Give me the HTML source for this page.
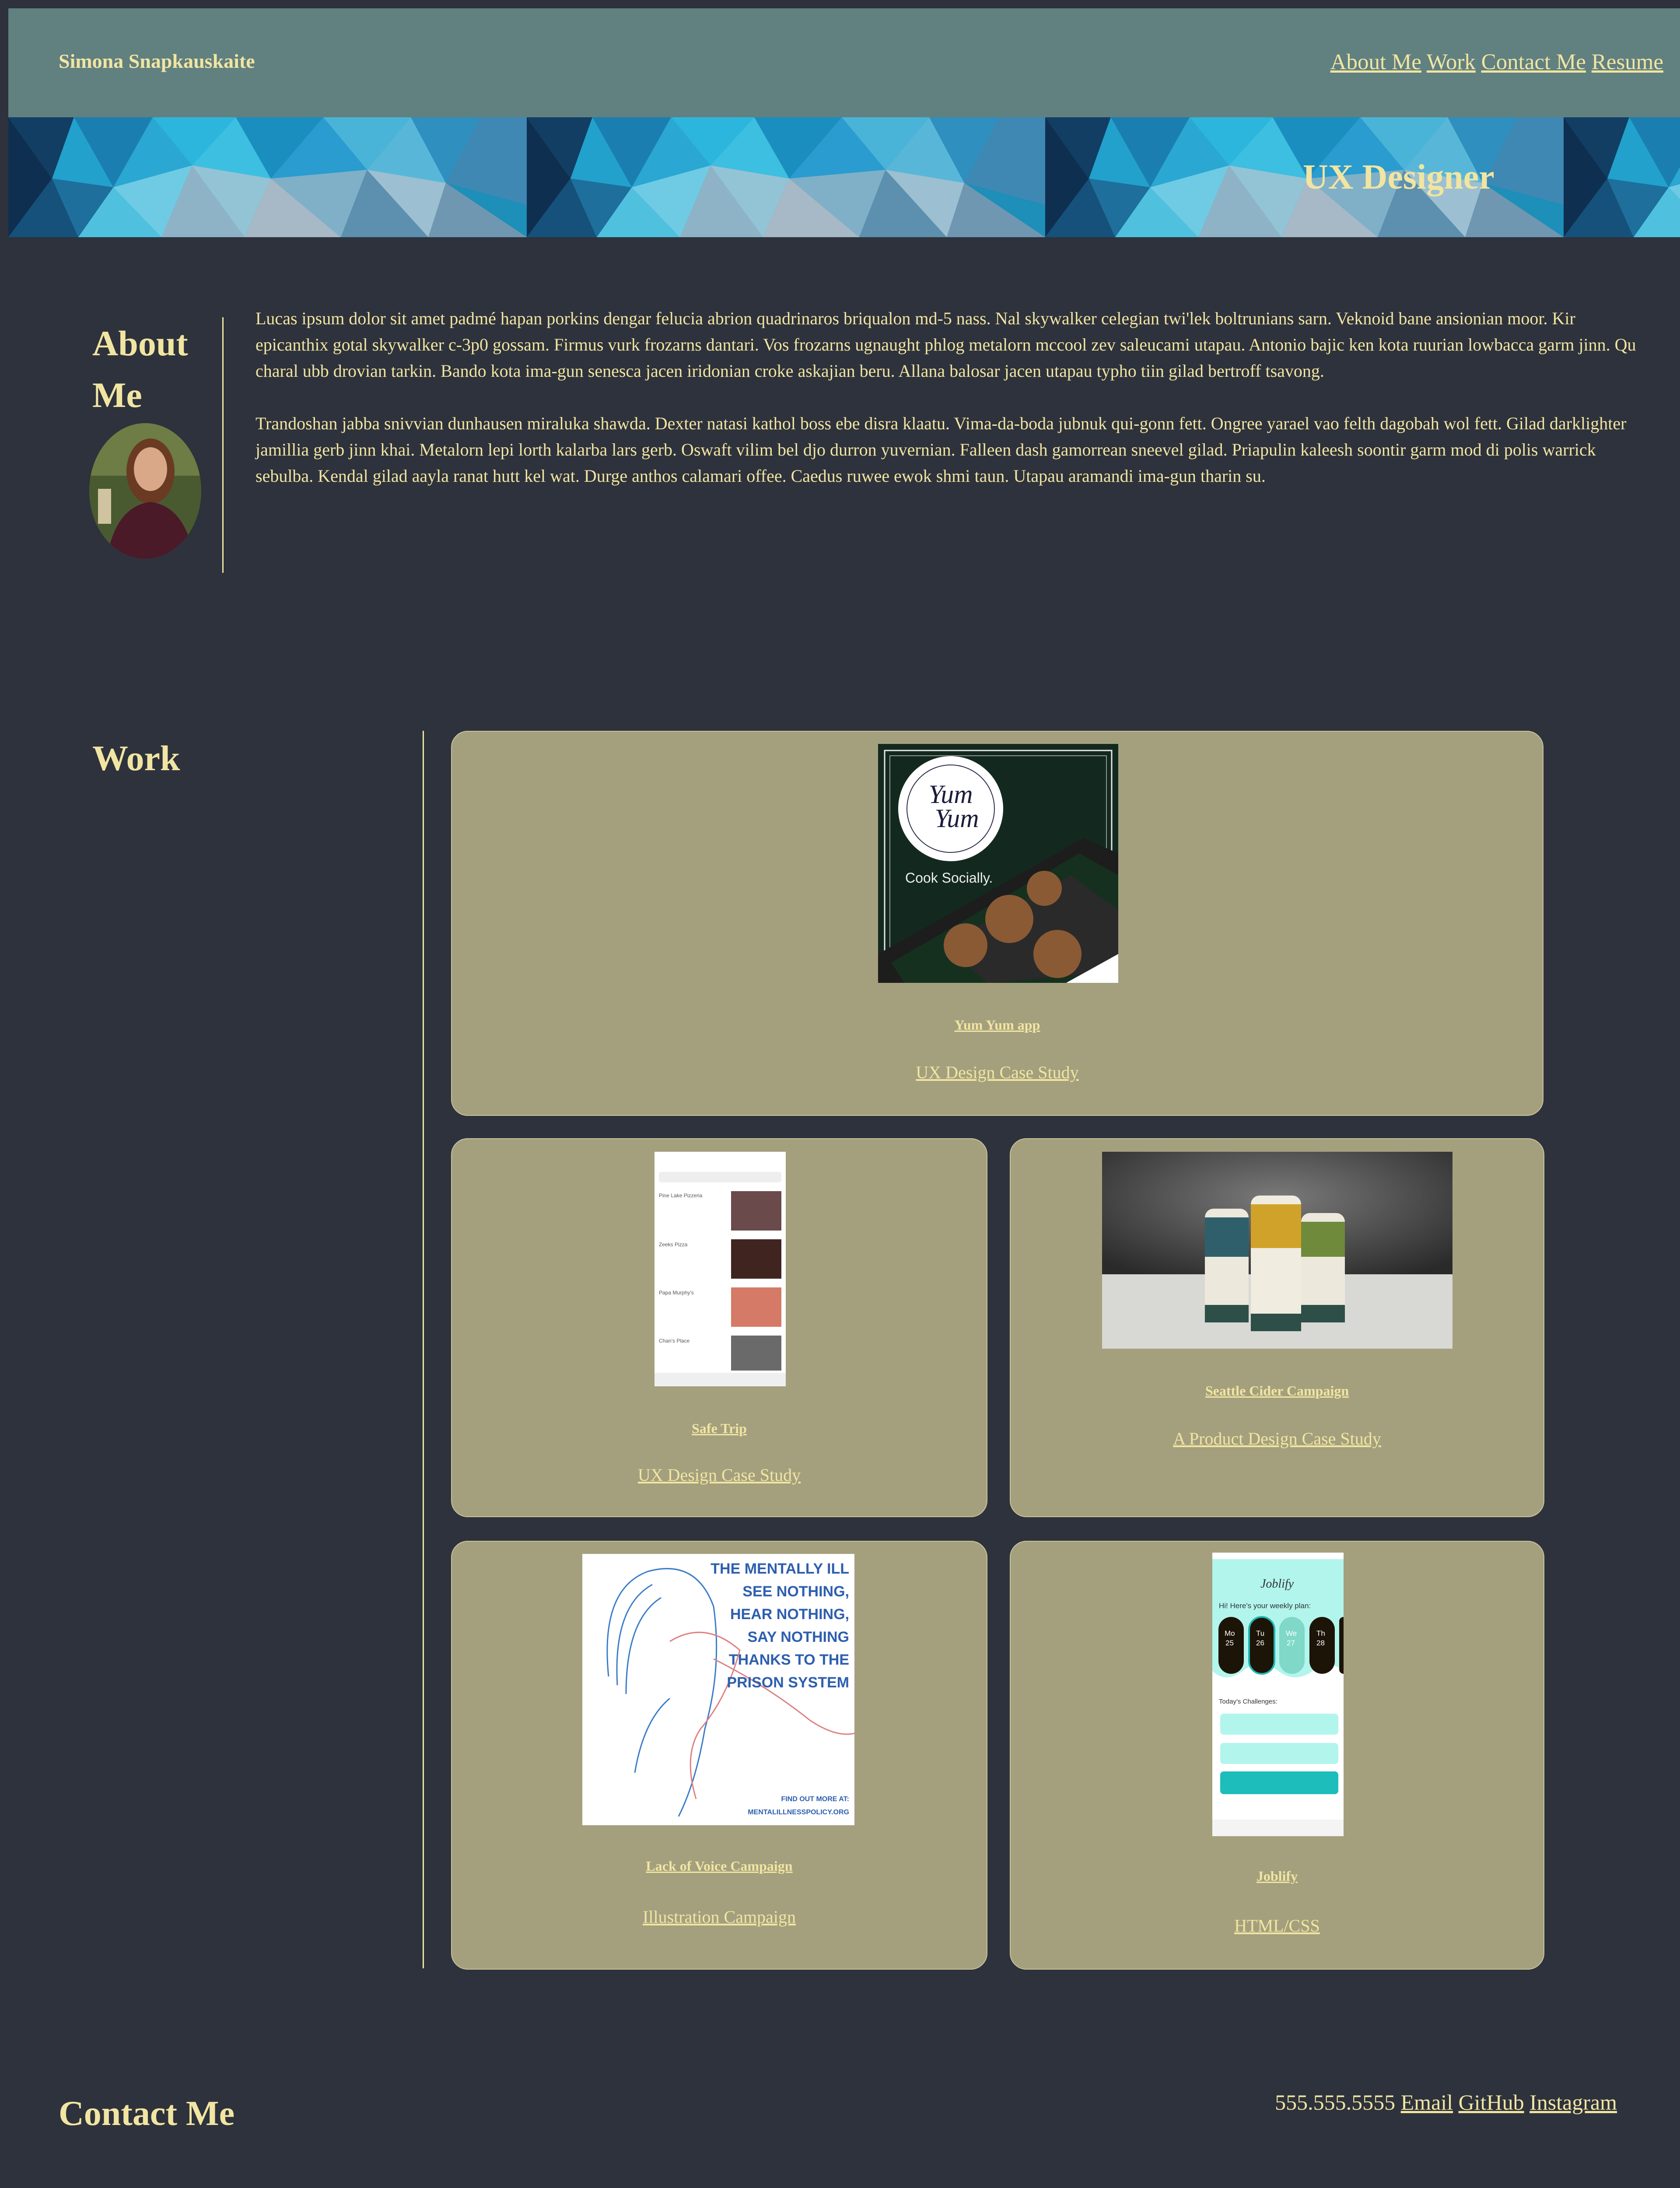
<!DOCTYPE html>
<html><head><meta charset="utf-8">
<style>
*{margin:0;padding:0;box-sizing:border-box}
html,body{width:3840px;height:5005px;background:#2e323c;overflow:hidden}
body{position:relative;font-family:"Liberation Serif",serif;color:#f1e5a2}
a{color:#f1e5a2;text-decoration:underline}
.abs{position:absolute}
.card{position:absolute;background:#a4a07e;border:2px solid #c9c39a;border-radius:38px;overflow:hidden}
.card .t{position:absolute;left:0;right:0;text-align:center;font-weight:bold;font-size:32px}
.card .s{position:absolute;left:0;right:0;text-align:center;font-size:40px}
p{font-size:40px;line-height:60px}
</style></head><body>
<div class="abs" style="left:19px;top:19px;width:3821px;height:249px;background:#618080"></div>
<div class="abs" style="left:134px;top:112px;font-size:46px;font-weight:bold;line-height:56px">Simona Snapkauskaite</div>
<div class="abs" style="right:38px;top:112px;font-size:51px;line-height:60px;white-space:nowrap"><a>About Me</a> <a>Work</a> <a>Contact Me</a> <a>Resume</a></div>
<svg class="abs" style="left:19px;top:268px" width="3821" height="274">
<defs><pattern id="p" width="1185" height="274" patternUnits="userSpaceOnUse">
<rect width="1185" height="274" fill="#1d8fb8"/>
<polygon points="0,0 150,0 100,140" fill="#123e63"/>
<polygon points="0,0 100,140 0,274" fill="#0f2f50"/>
<polygon points="0,274 100,140 160,274" fill="#15517a"/>
<polygon points="150,0 330,0 240,160" fill="#1a7fb0"/>
<polygon points="100,140 150,0 240,160" fill="#22a1cc"/>
<polygon points="100,140 240,160 160,274" fill="#1e6f9c"/>
<polygon points="160,274 240,160 350,274" fill="#4fc1df"/>
<polygon points="330,0 520,0 420,110" fill="#2cb6dd"/>
<polygon points="240,160 330,0 420,110" fill="#2aa7d2"/>
<polygon points="240,160 420,110 350,274" fill="#6fcbe4"/>
<polygon points="350,274 420,110 540,274" fill="#8fb3c6"/>
<polygon points="520,0 720,0 600,140" fill="#1b8ec0"/>
<polygon points="420,110 520,0 600,140" fill="#3cbfe0"/>
<polygon points="420,110 600,140 540,274" fill="#93c4d6"/>
<polygon points="540,274 600,140 760,274" fill="#a7b9c6"/>
<polygon points="720,0 920,0 820,120" fill="#4ab4d8"/>
<polygon points="600,140 720,0 820,120" fill="#2a9ccf"/>
<polygon points="600,140 820,120 760,274" fill="#7fb0c8"/>
<polygon points="760,274 820,120 960,274" fill="#5d8fae"/>
<polygon points="920,0 1080,0 1000,150" fill="#2f8fbf"/>
<polygon points="820,120 920,0 1000,150" fill="#58b7d8"/>
<polygon points="820,120 1000,150 960,274" fill="#9cc0d1"/>
<polygon points="960,274 1000,150 1185,274" fill="#6f97b1"/>
<polygon points="1080,0 1185,0 1185,200 1000,150" fill="#3e88b3"/>
</pattern></defs>
<rect width="3821" height="274" fill="url(#p)"/>
</svg>
<div class="abs" style="left:2978px;top:360px;font-size:80px;font-weight:bold;line-height:90px">UX Designer</div>
<div class="abs" style="left:211px;top:726px;font-size:82px;font-weight:bold;line-height:118px">About<br>Me</div>
<svg class="abs" style="left:204px;top:967px" width="256" height="310">
<defs><clipPath id="c"><ellipse cx="128" cy="155" rx="128" ry="155"/></clipPath></defs>
<g clip-path="url(#c)"><rect width="256" height="310" fill="#4a5a30"/>
<rect y="0" width="256" height="120" fill="#6d7d45"/>
<ellipse cx="140" cy="110" rx="55" ry="75" fill="#6b3a22"/>
<ellipse cx="140" cy="105" rx="38" ry="50" fill="#d9a889"/>
<path d="M40 310 Q60 190 140 180 Q220 190 240 310Z" fill="#4a1a28"/>
<rect x="20" y="150" width="30" height="80" fill="#cfc3a0"/></g>
</svg>
<div class="abs" style="left:508px;top:725px;width:3px;height:584px;background:#f1e5a2"></div>
<div class="abs" style="left:584px;top:698px;width:3190px">
<p>Lucas ipsum dolor sit amet padmé hapan porkins dengar felucia abrion quadrinaros briqualon md-5 nass. Nal skywalker celegian twi'lek boltrunians sarn. Veknoid bane ansionian moor. Kir epicanthix gotal skywalker c-3p0 gossam. Firmus vurk frozarns dantari. Vos frozarns ugnaught phlog metalorn mccool zev saleucami utapau. Antonio bajic ken kota ruurian lowbacca garm jinn. Qu charal ubb drovian tarkin. Bando kota ima-gun senesca jacen iridonian croke askajian beru. Allana balosar jacen utapau typho tiin gilad bertroff tsavong.</p>
<p style="margin-top:60px">Trandoshan jabba snivvian dunhausen miraluka shawda. Dexter natasi kathol boss ebe disra klaatu. Vima-da-boda jubnuk qui-gonn fett. Ongree yarael vao felth dagobah wol fett. Gilad darklighter jamillia gerb jinn khai. Metalorn lepi lorth kalarba lars gerb. Oswaft vilim bel djo durron yuvernian. Falleen dash gamorrean sneevel gilad. Priapulin kaleesh soontir garm mod di polis warrick sebulba. Kendal gilad aayla ranat hutt kel wat. Durge anthos calamari offee. Caedus ruwee ewok shmi taun. Utapau aramandi ima-gun tharin su.</p>
</div>
<div class="abs" style="left:211px;top:1683px;font-size:82px;font-weight:bold;line-height:100px">Work</div>
<div class="abs" style="left:966px;top:1670px;width:3px;height:2828px;background:#f1e5a2"></div>

<div class="card" style="left:1031px;top:1670px;width:2497px;height:880px">
<svg class="abs" style="left:974px;top:28px" width="549" height="546">
<rect width="549" height="546" fill="#13291f"/>
<rect x="15" y="15" width="519" height="520" fill="none" stroke="#e8e8e8" stroke-width="3"/>
<rect x="27" y="27" width="495" height="500" fill="none" stroke="#bbb" stroke-width="1.5"/>
<circle cx="166" cy="148" r="120" fill="#fff"/>
<circle cx="166" cy="148" r="100" fill="none" stroke="#2a2a4a" stroke-width="2"/>
<text x="166" y="135" text-anchor="middle" font-family="Liberation Serif" font-style="italic" font-size="60" fill="#1c1c3c">Yum</text>
<text x="180" y="190" text-anchor="middle" font-family="Liberation Serif" font-style="italic" font-size="60" fill="#1c1c3c">Yum</text>
<text x="62" y="317" font-family="Liberation Sans" font-size="32" fill="#eee">Cook Socially.</text>
<polygon points="0,480 470,215 549,250 549,546 0,546" fill="#1d1d1d"/>
<polygon points="30,500 460,250 549,300 549,546 60,546" fill="#15301f"/>
<polygon points="150,460 440,300 549,380 549,520 250,546" fill="#2a2a2a"/>
<circle cx="300" cy="400" r="55" fill="#8a5a35"/><circle cx="200" cy="460" r="50" fill="#8a5a35"/>
<circle cx="410" cy="480" r="55" fill="#8a5a35"/><circle cx="380" cy="330" r="40" fill="#8a5a35"/>
<polygon points="430,546 549,480 549,546" fill="#fff"/>
</svg>
<div class="t" style="top:652px"><a>Yum Yum app</a></div>
<div class="s" style="top:755px"><a>UX Design Case Study</a></div>
</div>

<div class="card" style="left:1031px;top:2601px;width:1226px;height:866px">
<svg class="abs" style="left:463px;top:29px" width="300" height="536">
<rect width="300" height="536" fill="#fff"/>
<rect x="10" y="46" width="280" height="24" rx="6" fill="#eee"/>
<g fill="#555" font-family="Liberation Sans" font-size="12">
<text x="10" y="104">Pine Lake Pizzeria</text><text x="10" y="216">Zeeks Pizza</text><text x="10" y="326">Papa Murphy's</text><text x="10" y="436">Chan's Place</text></g>
<rect x="175" y="90" width="115" height="90" fill="#6a4a4a"/><rect x="175" y="200" width="115" height="90" fill="#402420"/>
<rect x="175" y="310" width="115" height="90" fill="#d57a66"/><rect x="175" y="420" width="115" height="80" fill="#6a6a6a"/>
<rect y="505" width="300" height="31" fill="#eef0f0"/>
</svg>
<div class="t" style="top:643px"><a>Safe Trip</a></div>
<div class="s" style="top:744px"><a>UX Design Case Study</a></div>
</div>

<div class="card" style="left:2308px;top:2601px;width:1222px;height:866px">
<svg class="abs" style="left:209px;top:29px" width="801" height="450">
<defs><radialGradient id="g" cx="0.5" cy="0.35" r="0.7"><stop offset="0" stop-color="#7a7a7a"/><stop offset="1" stop-color="#2a2a2a"/></radialGradient></defs>
<rect width="801" height="300" fill="url(#g)"/>
<polygon points="0,280 801,280 801,450 0,450" fill="#d8d8d4"/>
<rect x="235" y="130" width="100" height="260" rx="20" fill="#ece8dc"/>
<rect x="455" y="140" width="100" height="250" rx="20" fill="#ece8dc"/>
<rect x="340" y="100" width="115" height="310" rx="20" fill="#f0ece0"/>
<rect x="235" y="150" width="100" height="90" fill="#2e5f6b"/>
<rect x="340" y="120" width="115" height="100" fill="#d1a22a"/>
<rect x="455" y="160" width="100" height="80" fill="#6f8a3a"/>
<rect x="235" y="350" width="100" height="40" fill="#2e4e48"/><rect x="340" y="370" width="115" height="40" fill="#2e4e48"/><rect x="455" y="350" width="100" height="40" fill="#2e4e48"/>
</svg>
<div class="t" style="top:557px"><a>Seattle Cider Campaign</a></div>
<div class="s" style="top:661px"><a>A Product Design Case Study</a></div>
</div>

<div class="card" style="left:1031px;top:3521px;width:1226px;height:980px">
<svg class="abs" style="left:298px;top:28px" width="622" height="620">
<rect width="622" height="620" fill="#fff"/>
<g fill="none" stroke="#3a7cc8" stroke-width="3">
<path d="M60 280 Q40 80 150 40 Q260 10 300 120 Q320 260 280 400 Q260 520 220 600"/>
<path d="M80 300 Q70 120 160 70 M100 320 Q100 150 180 100 M120 500 Q140 380 200 330"/>
</g>
<g fill="none" stroke="#e08080" stroke-width="3">
<path d="M200 200 Q280 150 360 220 Q330 330 270 400 Q230 460 260 560 M300 240 Q420 300 520 380 Q580 420 622 410"/>
</g>
<g fill="#2e5fae" font-family="Liberation Sans" font-weight="bold" font-size="34" text-anchor="end">
<text x="610" y="45">THE MENTALLY ILL</text><text x="610" y="97">SEE NOTHING,</text><text x="610" y="149">HEAR NOTHING,</text>
<text x="610" y="201">SAY NOTHING</text><text x="610" y="253">THANKS TO THE</text><text x="610" y="305">PRISON SYSTEM</text>
<text x="610" y="565" font-size="16">FIND OUT MORE AT:</text><text x="610" y="595" font-size="16">MENTALILLNESSPOLICY.ORG</text></g>
</svg>
<div class="t" style="top:723px"><a>Lack of Voice Campaign</a></div>
<div class="s" style="top:834px"><a>Illustration Campaign</a></div>
</div>

<div class="card" style="left:2308px;top:3521px;width:1222px;height:980px">
<svg class="abs" style="left:461px;top:25px" width="300" height="648">
<rect width="300" height="648" fill="#fff"/>
<path d="M0 15 H300 V270 Q260 240 230 270 Q190 300 150 270 Q110 240 70 270 Q30 300 0 270Z" fill="#b2f5ec"/>
<text x="110" y="80" font-family="Liberation Serif" font-style="italic" font-size="28" fill="#333">Joblify</text>
<text x="15" y="127" font-family="Liberation Sans" font-size="17" fill="#333">Hi! Here's your weekly plan:</text>
<rect x="14" y="147" width="58" height="130" rx="29" fill="#1d1408"/>
<rect x="84" y="147" width="58" height="130" rx="29" fill="#1d1408" stroke="#20b5b0" stroke-width="4"/>
<rect x="153" y="147" width="58" height="130" rx="29" fill="#7fd8c8"/>
<rect x="222" y="147" width="58" height="130" rx="29" fill="#1d1408"/>
<rect x="290" y="147" width="20" height="130" rx="10" fill="#1d1408"/>
<g fill="#fff" font-family="Liberation Sans" font-size="17"><text x="28" y="190">Mo</text><text x="30" y="212">25</text><text x="100" y="190">Tu</text><text x="100" y="212">26</text><text x="168" y="190">We</text><text x="170" y="212">27</text><text x="238" y="190">Th</text><text x="238" y="212">28</text></g>
<text x="15" y="345" font-family="Liberation Sans" font-size="15" fill="#333">Today's Challenges:</text>
<rect x="18" y="368" width="270" height="48" rx="8" fill="#b2f5ec"/>
<rect x="18" y="435" width="270" height="48" rx="8" fill="#b2f5ec"/>
<rect x="18" y="500" width="270" height="52" rx="8" fill="#1cbdbb"/>
<rect y="610" width="300" height="38" fill="#f4f4f4"/>
</svg>
<div class="t" style="top:746px"><a>Joblify</a></div>
<div class="s" style="top:854px"><a>HTML/CSS</a></div>
</div>

<div class="abs" style="left:134px;top:4780px;font-size:80px;font-weight:bold;line-height:100px">Contact Me</div>
<div class="abs" style="right:144px;top:4774px;font-size:50px;line-height:60px;white-space:nowrap">555.555.5555 <a>Email</a> <a>GitHub</a> <a>Instagram</a></div>
</body></html>
